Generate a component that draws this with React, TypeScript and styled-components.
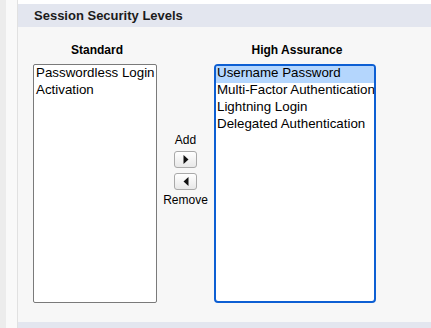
import styled, { createGlobalStyle } from "styled-components";

// #region Style

const GlobalStyle = createGlobalStyle`
  html, body {
    margin: 0;
    padding: 0;
    background: #ffffff;
  }
  body {
    font-family: "Liberation Sans", Arial, sans-serif;
    color: #000000;
  }
`;

const Page = styled.div`
  display: flex;
  width: 431px;
  height: 328px;
  overflow: hidden;
`;

const SideRail = styled.div`
  width: 17px;
  flex: none;
  background: linear-gradient(to right, #ececec 0 6px, #f9f9f9 6px);
  border-right: 1px solid #e1e1e1;
`;

const Main = styled.div`
  flex: 1;
  display: flex;
  flex-direction: column;
  padding-top: 4px;
  background: #ffffff;
`;

const SectionHeader = styled.h3`
  margin: 0;
  height: 23px;
  padding-left: 16px;
  background: #e3e6ef;
  font-size: 13px;
  font-weight: bold;
  line-height: 23px;
  color: #1b1b1b;
`;

const SectionBody = styled.div`
  flex: 1;
  display: flex;
  align-items: flex-start;
  padding: 16px 0 0 15px;
  background: #f7f7f7;
`;

const BottomBand = styled.div`
  height: 6px;
  background: #e3e6ef;
`;

const Column = styled.div<{ $width: number }>`
  width: ${(p) => p.$width}px;
  display: flex;
  flex-direction: column;
  align-items: center;
`;

const ColumnTitle = styled.div`
  font-size: 12px;
  font-weight: bold;
  line-height: 14px;
  margin: 0 0 7px 4px;
`;

const ListBox = styled.div<{ $focused?: boolean }>`
  box-sizing: border-box;
  width: 100%;
  height: 239px;
  background: #ffffff;
  border: ${(p) => (p.$focused ? "2px solid #0d5fd3" : "1px solid #7a7a7a")};
  border-radius: ${(p) => (p.$focused ? "4px" : "2px")};
  padding-top: ${(p) => (p.$focused ? "0" : "1px")};
  overflow: hidden;
`;

const ListOption = styled.div<{ $selected?: boolean }>`
  box-sizing: border-box;
  height: 17px;
  padding-left: ${(p) => (p.$selected !== undefined ? "1px" : "2px")};
  font-size: 13.33px;
  line-height: 14px;
  white-space: nowrap;
  background: ${(p) => (p.$selected ? "#b4d6fd" : "transparent")};
`;

const MoveControls = styled.div`
  width: 57px;
  display: flex;
  flex-direction: column;
  align-items: center;
  padding-top: 90px;
`;

const MoveLabel = styled.div`
  font-size: 12px;
  line-height: 14px;
`;

const MoveButton = styled.button`
  box-sizing: border-box;
  width: 23px;
  height: 17px;
  margin: 0;
  padding: 0;
  display: flex;
  align-items: center;
  justify-content: center;
  border: 1px solid #a9a9a9;
  border-radius: 3px;
  background: linear-gradient(#ffffff, #e8e8e8);
  cursor: pointer;
`;

const ButtonStack = styled.div`
  display: flex;
  flex-direction: column;
  gap: 5px;
  margin: 4px 0 3px;
`;

// #endregion

const standardItems = ["Passwordless Login", "Activation"];
const highAssuranceItems = [
  "Username Password",
  "Multi-Factor Authentication",
  "Lightning Login",
  "Delegated Authentication",
];

function Arrow({ dir }: { dir: "right" | "left" }) {
  return (
    <svg width="6" height="9" viewBox="0 0 6 9">
      {dir === "right" ? (
        <polygon points="0.5,0 5.5,4.5 0.5,9" fill="#111" />
      ) : (
        <polygon points="5.5,0 0.5,4.5 5.5,9" fill="#111" />
      )}
    </svg>
  );
}

export default function App() {
  return (
    <Page>
      <GlobalStyle />
      <SideRail />
      <Main>
        <SectionHeader>Session Security Levels</SectionHeader>
        <SectionBody>
          <Column $width={124}>
            <ColumnTitle>Standard</ColumnTitle>
            <ListBox>
              {standardItems.map((item) => (
                <ListOption key={item}>{item}</ListOption>
              ))}
            </ListBox>
          </Column>
          <MoveControls>
            <MoveLabel>Add</MoveLabel>
            <ButtonStack>
              <MoveButton aria-label="Add">
                <Arrow dir="right" />
              </MoveButton>
              <MoveButton aria-label="Remove">
                <Arrow dir="left" />
              </MoveButton>
            </ButtonStack>
            <MoveLabel>Remove</MoveLabel>
          </MoveControls>
          <Column $width={162}>
            <ColumnTitle>High Assurance</ColumnTitle>
            <ListBox $focused>
              {highAssuranceItems.map((item, i) => (
                <ListOption key={item} $selected={i === 0}>
                  {item}
                </ListOption>
              ))}
            </ListBox>
          </Column>
        </SectionBody>
        <BottomBand />
      </Main>
    </Page>
  );
}
